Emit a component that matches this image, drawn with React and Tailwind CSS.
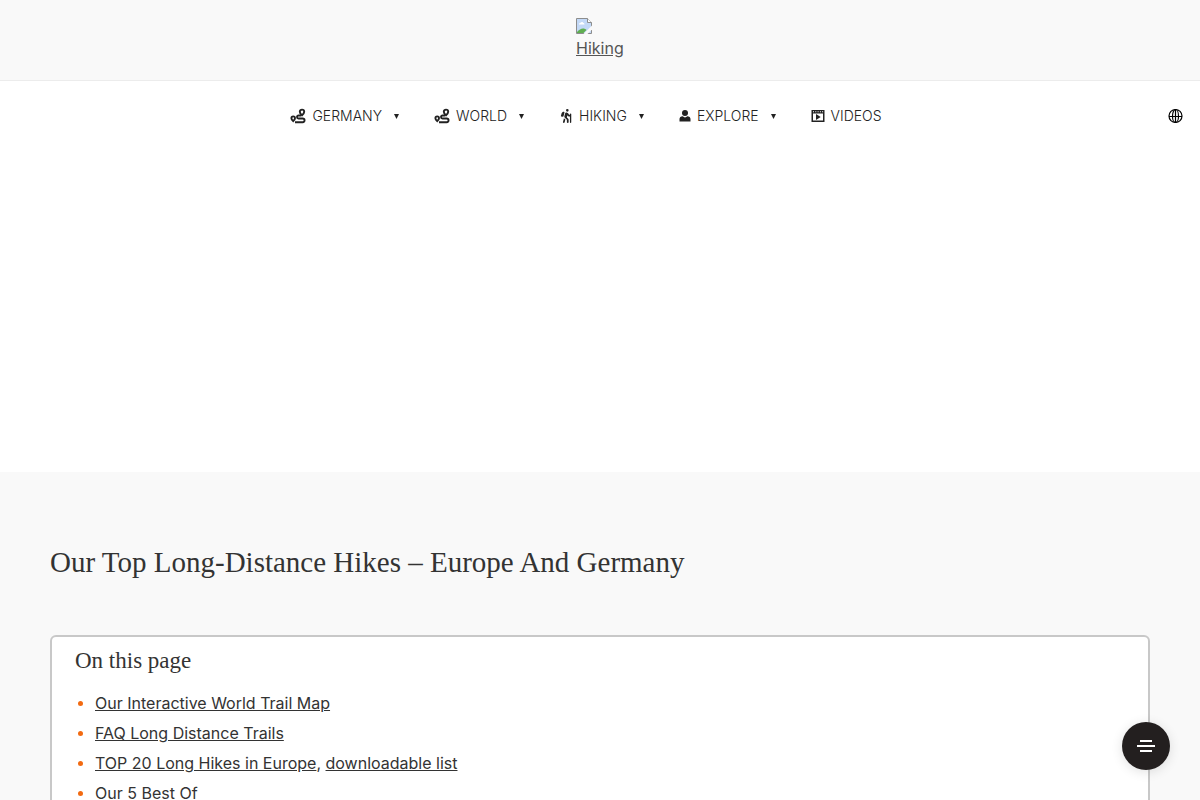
import React from "react";
import { FaPersonHiking } from "react-icons/fa6";

function BrokenImage() {
  return (
    <svg viewBox="0 0 16 16" className="block h-4 w-4" aria-hidden="true">
      <path d="M.5.5h11l4 4v11H.5z" fill="#c3d9f7" stroke="#8d8d8d" />
      <path d="M11.5.5v4h4" fill="#fff" stroke="#8d8d8d" />
      <path d="M3 6.500c0-1.200.8-1.800 1.700-1.800.5-1 2.300-.8 2.600.4.9 0 1.200.6 1.200 1.400z" fill="#fff" />
      <path d="M1 15v-1c2-2 4-3.500 6-3.500 1.500 0 2.500.5 3.500 1.500L7.500 15z" fill="#5fae50" />
      <path d="M16 7.500 7.500 16h4L16 11.500z" fill="#f9f9f9" />
    </svg>
  );
}

function RouteIcon() {
  return (
    <svg viewBox="0 0 16 16" className="h-4 w-4" fill="none" stroke="currentColor" aria-hidden="true">
      <path
        d="M12 1.600a2.200 2.200 0 0 1 2.200 2.200c0 1.400-1.200 2.700-2.200 3.600-1-.9-2.200-2.200-2.200-3.600A2.200 2.200 0 0 1 12 1.600z"
        strokeWidth="1.900"
      />
      <path
        d="M3.200 8.400a1.800 1.800 0 0 1 1.800 1.800c0 1.200-1 2.200-1.800 3-.8-.8-1.800-1.800-1.800-3a1.800 1.800 0 0 1 1.800-1.800z"
        strokeWidth="1.900"
      />
      <path d="M11 7.500H8.500a1.500 1.500 0 0 0 0 3h4.200a1.800 1.800 0 0 1 0 3.700H5" strokeWidth="1.900" />
    </svg>
  );
}

function PersonIcon() {
  return (
    <svg viewBox="0 0 12 14" className="h-[14px] w-3" fill="currentColor" aria-hidden="true">
      <circle cx="6" cy="4" r="3" />
      <path d="M.5 12.500V10c0-1.600 1.200-2.500 3.200-2.700Q6 9.500 8.300 7.300c2 .2 3.200 1.100 3.200 2.700v2.500z" />
    </svg>
  );
}

function VideoIcon() {
  return (
    <svg viewBox="0 0 14 14" className="h-[14px] w-[14px]" fill="currentColor" aria-hidden="true">
      <path
        fillRule="evenodd"
        d="M.5 1h13v12H.5zM2 4.500v7h10v-7zM2 2.200v1h1v-1zm2.300 0v1h1v-1zm2.300 0v1h1v-1zm2.300 0v1h1v-1zm2.200 0v1h1v-1z"
      />
      <path d="M5 5 9.700 8 5 11z" />
    </svg>
  );
}

function GlobeIcon() {
  return (
    <svg viewBox="0 0 16 16" className="h-4 w-4" fill="none" stroke="currentColor" strokeWidth="1.200" aria-hidden="true">
      <circle cx="7.500" cy="8" r="6.500" />
      <ellipse cx="7.500" cy="8" rx="3" ry="6.500" />
      <path d="M1 8.500h13M7.500 1.500v13" />
    </svg>
  );
}

const items = [
  { label: "GERMANY", icon: <RouteIcon />, menu: true },
  { label: "WORLD", icon: <RouteIcon />, menu: true },
  { label: "HIKING", icon: <FaPersonHiking className="h-[14px] w-[14px]" aria-hidden="true" />, menu: true },
  { label: "EXPLORE", icon: <PersonIcon />, menu: true },
  { label: "VIDEOS", icon: <VideoIcon />, menu: false },
];

const contents = [
  [{ text: "Our Interactive World Trail Map", link: true }],
  [{ text: "FAQ Long Distance Trails", link: true }],
  [
    { text: "TOP 20 Long Hikes in Europe", link: true },
    { text: ", ", link: false },
    { text: "downloadable list", link: true },
  ],
  [{ text: "Our 5 Best Of", link: false }],
];

export default function App() {
  return (
    <div className="min-h-screen bg-[#f9f9f9] font-['Inter',sans-serif] text-[#333333]">
      <header>
        <div className="flex justify-center border-b border-[#ececec] py-[18px]">
          <a href="#home" className="w-12 text-base leading-7 text-[#555555] underline">
            <BrokenImage />
            <span className="block">Hiking</span>
          </a>
        </div>
        <div className="flex h-[70px] items-center bg-white pr-4 pl-1 text-[#222222]">
          <nav aria-label="Main" className="flex flex-1 justify-center">
            <ul className="flex items-center gap-[35px]">
              {items.map((item) => (
                <li key={item.label}>
                  <a href="#menu" className="flex items-center gap-1.5 text-sm font-light">
                    {item.icon}
                    <span>{item.label}</span>
                    {item.menu && (
                      <svg viewBox="0 0 5 5" className="ml-1.5 h-[5px] w-[5px]" fill="currentColor" aria-hidden="true">
                        <path d="M0 0h5L2.500 5z" />
                      </svg>
                    )}
                  </a>
                </li>
              ))}
            </ul>
          </nav>
          <button type="button" aria-label="Language" className="text-black">
            <GlobeIcon />
          </button>
        </div>
      </header>

      <div className="h-[321px] bg-white" />

      <main className="px-[50px] pt-[70px]">
        <h1 className="font-['Liberation_Serif',serif] text-[29px] leading-10">
          Our Top Long-Distance Hikes – Europe And Germany
        </h1>
        <section className="mt-[53px] rounded-md border-2 border-[#c8c8c8] bg-white px-[23px] pt-2 pb-12">
          <h2 className="font-['Liberation_Serif',serif] text-[23px] leading-8">On this page</h2>
          <ul className="mt-[11px] text-base leading-[30px]">
            {contents.map((parts, i) => (
              <li key={i} className="flex items-center">
                <span className="mr-3 ml-[3px] h-[5px] w-[5px] rounded-full bg-[#f26a11]" />
                <span>
                  {parts.map((part) =>
                    part.link ? (
                      <a key={part.text} href="#section" className="underline">
                        {part.text}
                      </a>
                    ) : (
                      part.text
                    )
                  )}
                </span>
              </li>
            ))}
          </ul>
        </section>
      </main>

      <button
        type="button"
        aria-label="Open contents"
        className="fixed right-[30px] bottom-[30px] flex h-12 w-12 items-center justify-center rounded-full bg-[#231f1f] text-white shadow-[0_2px_12px_rgba(0,0,0,0.12)]"
      >
        <svg viewBox="0 0 18 12" className="h-3 w-[18px]" fill="currentColor" aria-hidden="true">
          <path d="M3 0h12v2H3zM0 5h18v2H0zM3 10h12v2H3z" />
        </svg>
      </button>
    </div>
  );
}
